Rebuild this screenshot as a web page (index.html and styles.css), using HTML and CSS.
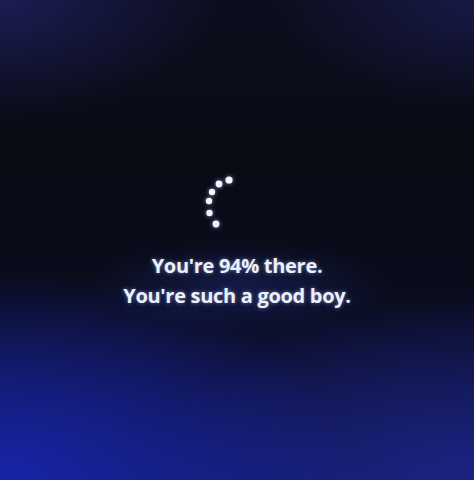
FILE: index.html
```html
<!DOCTYPE html>
<html>
<head>
    <title>Updating</title>
    <link rel="stylesheet" href="styles.css">
</head>
<body>
    <div class="screen">
        <svg class="spinner" width="60" height="60" viewBox="0 0 60 60">
            <!-- dots trail along the left side of the ring -->
            <circle cx="39" cy="15" r="3.6"/>
            <circle cx="29" cy="19" r="3.4"/>
            <circle cx="22" cy="27" r="3.2"/>
            <circle cx="19" cy="36" r="3.2"/>
            <circle cx="19.5" cy="48" r="3.2"/>
            <circle cx="26" cy="59" r="3.4"/>
        </svg>
        <p class="message">You're 94% there.<br>You're such a good boy.</p>
    </div>
</body>
</html>
```

FILE: styles.css
```css
html, body {
    margin: 0;
    height: 100%;
}
body {
    background-color: #0b0d1a;
    background-image:
        radial-gradient(ellipse 150px 45px at 238px 286px, rgba(40, 60, 170, 0.3), transparent),
        radial-gradient(ellipse 360px 210px at 0 480px, rgba(24, 36, 170, 0.95), transparent),
        radial-gradient(ellipse 330px 180px at 474px 480px, rgba(30, 38, 140, 0.75), transparent),
        radial-gradient(ellipse 220px 120px at 0 0, rgba(34, 34, 105, 0.7), transparent),
        radial-gradient(ellipse 200px 110px at 474px 0, rgba(32, 32, 95, 0.6), transparent),
        linear-gradient(#0c0e1e, #090b14 30%, #0a0c1c 60%, #121a64);
    font-family: "Open Sans", "DejaVu Sans", sans-serif;
    overflow: hidden;
}
.screen {
    display: flex;
    flex-direction: column;
    align-items: center;
    padding-top: 165px;
    height: 100%;
    box-sizing: border-box;
}
.spinner {
    display: block;
    margin-right: 34px;
    overflow: visible;
}
.spinner circle {
    fill: #f2f4ff;
    filter: drop-shadow(0 0 2px rgba(180, 200, 255, 0.7));
}
.message {
    margin: 26px 0 0;
    color: #eef0fa;
    font-size: 20px;
    font-weight: 700;
    line-height: 30px;
    text-align: center;
    letter-spacing: -0.3px;
    text-shadow: 0 0 4px rgba(170, 190, 255, 0.6);
}
```
